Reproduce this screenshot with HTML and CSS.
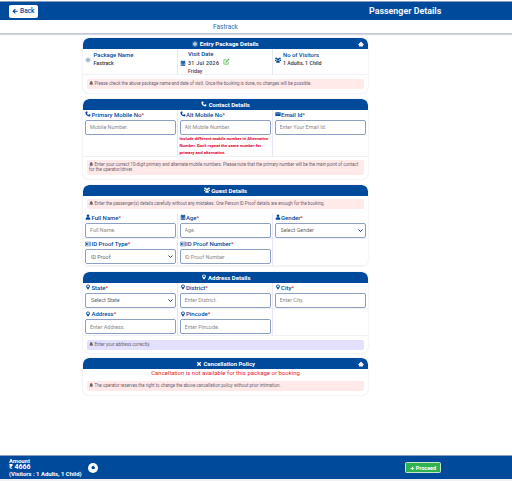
FILE: index.html
```html
<!DOCTYPE html>
<html lang="en">
<head>
<meta charset="utf-8">
<title>Passenger Details</title>
<link rel="stylesheet" href="styles.css">
</head>
<body>
<svg class="defs" width="0" height="0" aria-hidden="true">
  <symbol id="i-snow" viewBox="0 0 16 16"><path d="M8 1v14M2 4.500l12 7M14 4.500l-12 7M6 2l2 2 2-2M6 14l2-2 2 2M2 7l2.500 1L2 9.500M14 7l-2.500 1 2.500 1.500" fill="none" stroke="currentColor" stroke-width="1.800"/></symbol>
  <symbol id="i-phone" viewBox="0 0 16 16"><path d="M3 1l3 .5 1 3.500-2 1.500c.8 1.800 2.200 3.200 4 4l1.500-2 3.500 1 .5 3c-.5 1-1.500 2-3 2C6 14.500 1 9 1 4c0-1.500 1-2.500 2-3z" fill="currentColor"/></symbol>
  <symbol id="i-users" viewBox="0 0 16 16"><circle cx="8" cy="6" r="3" fill="currentColor"/><circle cx="3" cy="4" r="2.500" fill="currentColor"/><circle cx="13" cy="4" r="2.500" fill="currentColor"/><path d="M3.500 15v-3.500c0-1.500 1.500-2 4.500-2s4.500.5 4.500 2V15zM0 10.500V8.500C0 7.500 1 7 3 7l1.500.5L3 10.500zM16 10.500V8.500c0-1-1-1.500-3-1.500l-1.500.5 1.500 3z" fill="currentColor"/></symbol>
  <symbol id="i-cal" viewBox="0 0 16 16"><path d="M2 3h12v12H2z" fill="currentColor"/><path d="M4 1.500h2v3H4zM10 1.500h2v3h-2z" fill="currentColor"/><path d="M3.500 7h2v2h-2zM7 7h2v2H7zM10.500 7h2v2h-2zM3.500 10.500h2v2h-2zM7 10.500h2v2H7zM10.500 10.500h2v2h-2z" fill="#fff"/></symbol>
  <symbol id="i-edit" viewBox="0 0 16 16"><path d="M12 9v5H2V4h6" fill="none" stroke="currentColor" stroke-width="1.800"/><path d="M6 8l7-7 2 2-7 7-3 1z" fill="currentColor"/></symbol>
  <symbol id="i-up" viewBox="0 0 16 16"><path d="M8 1.500l7.500 7.500-1 2-1.500-1V14.500H3V10l-1.500 1-1-2z" fill="currentColor"/></symbol>
  <symbol id="i-bell" viewBox="0 0 16 16"><path d="M8 1c3 0 4.500 2.500 4.500 5.500 0 2.500 1 3.500 2 4.500v1h-13v-1c1-1 2-2 2-4.500C3.500 3.500 5 1 8 1zM6 13h4c0 1-1 2-2 2s-2-1-2-2z" fill="currentColor"/></symbol>
  <symbol id="i-mail" viewBox="0 0 16 16"><path d="M1 3h14v10H1z" fill="currentColor"/><path d="M1.500 4L8 9l6.500-5" fill="none" stroke="#fff" stroke-width="1.200"/></symbol>
  <symbol id="i-user" viewBox="0 0 16 16"><circle cx="8" cy="4.500" r="3.500" fill="currentColor"/><path d="M2 15v-3c0-2.500 2-3.500 6-3.500s6 1 6 3.500v3z" fill="currentColor"/></symbol>
  <symbol id="i-card" viewBox="0 0 16 16"><path d="M1 3h14v10H1z" fill="none" stroke="currentColor" stroke-width="1.400"/><path d="M3 5.500h4v5H3zM9 6h4v1H9zM9 8h4v1H9z" fill="currentColor"/></symbol>
  <symbol id="i-pin" viewBox="0 0 16 16"><path d="M8 1a5 5 0 0 0-5 5c0 3.500 5 9 5 9s5-5.500 5-9a5 5 0 0 0-5-5zm0 2.500A2.500 2.500 0 1 1 8 8.500 2.500 2.500 0 0 1 8 3.500z" fill="currentColor" fill-rule="evenodd"/></symbol>
  <symbol id="i-x" viewBox="0 0 16 16"><path d="M2 4.500L4.500 2 8 5.500 11.500 2 14 4.500 10.500 8 14 11.500 11.500 14 8 10.500 4.500 14 2 11.500 5.500 8z" fill="currentColor"/></symbol>
  <symbol id="i-left" viewBox="0 0 16 16"><path d="M8 2l2 2-3 3h8v3H7l3 3-2 2-7-6.500z" fill="currentColor"/></symbol>
  <symbol id="i-right" viewBox="0 0 16 16"><path d="M8 2L6 4l3 3H1v3h8l-3 3 2 2 7-6.500z" fill="currentColor"/></symbol>
</svg>

<div class="topstrip"></div>
<header class="appbar">
  <button class="back" type="button"><svg class="ic"><use href="#i-left"/></svg> Back</button>
  <h1 class="title">Passenger Details</h1>
</header>
<div class="subbar"><span>Fastrack</span></div>

<main class="content">
  <section class="card">
    <h2 class="card-head"><svg class="ic"><use href="#i-snow"/></svg> Entry Package Details<svg class="ic collapse"><use href="#i-up"/></svg></h2>
    <div class="grid summary">
      <div class="cell info">
        <svg class="ic side pale"><use href="#i-snow"/></svg>
        <div><div class="info-label">Package Name</div><div class="info-val">Fastrack</div></div>
      </div>
      <div class="cell info visit">
        <svg class="ic side navy"><use href="#i-cal"/></svg>
        <div>
          <div class="info-label">Visit Date</div>
          <div class="info-val date">31 Jul 2026 <svg class="ic-lg green"><use href="#i-edit"/></svg></div>
          <div class="info-val day">Friday</div>
        </div>
      </div>
      <div class="cell info">
        <svg class="ic side navy"><use href="#i-users"/></svg>
        <div><div class="info-label">No of Visitors</div><div class="info-val">1 Adults, 1 Child</div></div>
      </div>
    </div>
    <p class="note"><svg class="ic-sm"><use href="#i-bell"/></svg> Please check the above package name and date of visit. Once the booking is done, no changes will be possible.</p>
  </section>

  <section class="card">
    <h2 class="card-head"><svg class="ic"><use href="#i-phone"/></svg> Contact Details</h2>
    <div class="grid">
      <div class="cell">
        <label class="lbl"><svg class="ic"><use href="#i-phone"/></svg> Primary Mobile No<b>*</b></label>
        <input class="field" placeholder="Mobile Number.">
      </div>
      <div class="cell">
        <label class="lbl"><svg class="ic"><use href="#i-phone"/></svg> Alt Mobile No<b>*</b></label>
        <input class="field" placeholder="Alt Mobile Number.">
        <p class="warn">Include different mobile number in Alternative Number. Don't repeat the same number for primary and alternative.</p>
      </div>
      <div class="cell">
        <label class="lbl"><svg class="ic"><use href="#i-mail"/></svg> Email Id<b>*</b></label>
        <input class="field" placeholder="Enter Your Email Id.">
      </div>
    </div>
    <p class="note note-tight"><svg class="ic-sm"><use href="#i-bell"/></svg> Enter your correct 10-digit primary and alternate mobile numbers. Please note that the primary number will be the main point of contact for the operator/driver.</p>
  </section>

  <section class="card">
    <h2 class="card-head"><svg class="ic"><use href="#i-users"/></svg> Guest Details</h2>
    <p class="note note-top"><svg class="ic-sm"><use href="#i-bell"/></svg> Enter the passenger(s) details carefully without any mistakes. One Person ID Proof details are enough for the booking.</p>
    <div class="grid">
      <div class="cell">
        <label class="lbl"><svg class="ic"><use href="#i-user"/></svg> Full Name<b>*</b></label>
        <input class="field" placeholder="Full Name.">
      </div>
      <div class="cell">
        <label class="lbl"><svg class="ic"><use href="#i-cal"/></svg> Age<b>*</b></label>
        <input class="field" placeholder="Age.">
      </div>
      <div class="cell">
        <label class="lbl"><svg class="ic"><use href="#i-user"/></svg> Gender<b>*</b></label>
        <select class="field"><option>Select Gender</option></select>
      </div>
      <div class="cell">
        <label class="lbl"><svg class="ic"><use href="#i-card"/></svg> ID Proof Type<b>*</b></label>
        <select class="field"><option>ID Proof</option></select>
      </div>
      <div class="cell">
        <label class="lbl"><svg class="ic"><use href="#i-card"/></svg> ID Proof Number<b>*</b></label>
        <input class="field" placeholder="ID Proof Number">
      </div>
      <div class="cell"></div>
    </div>
  </section>

  <section class="card">
    <h2 class="card-head"><svg class="ic"><use href="#i-pin"/></svg> Address Details</h2>
    <div class="grid">
      <div class="cell">
        <label class="lbl"><svg class="ic"><use href="#i-pin"/></svg> State<b>*</b></label>
        <select class="field"><option>Select State</option></select>
      </div>
      <div class="cell">
        <label class="lbl"><svg class="ic"><use href="#i-pin"/></svg> District<b>*</b></label>
        <input class="field" placeholder="Enter District.">
      </div>
      <div class="cell">
        <label class="lbl"><svg class="ic"><use href="#i-pin"/></svg> City<b>*</b></label>
        <input class="field" placeholder="Enter City.">
      </div>
      <div class="cell">
        <label class="lbl"><svg class="ic"><use href="#i-pin"/></svg> Address<b>*</b></label>
        <input class="field" placeholder="Enter Address.">
      </div>
      <div class="cell">
        <label class="lbl"><svg class="ic"><use href="#i-pin"/></svg> Pincode<b>*</b></label>
        <input class="field" placeholder="Enter Pincode.">
      </div>
      <div class="cell"></div>
    </div>
    <p class="note note-violet"><svg class="ic-sm"><use href="#i-bell"/></svg> Enter your address correctly.</p>
  </section>

  <section class="card">
    <h2 class="card-head"><svg class="ic"><use href="#i-x"/></svg> Cancellation Policy<svg class="ic collapse"><use href="#i-up"/></svg></h2>
    <p class="cancel">Cancellation is not available for this package or booking</p>
    <p class="note"><svg class="ic-sm"><use href="#i-bell"/></svg> The operator reserves the right to change the above cancellation policy without prior intimation.</p>
  </section>
</main>

<footer class="bottom">
  <div class="amount">
    <div>Amount</div>
    <div class="price">₹ 4666</div>
    <div>(Visitors : 1 Adults, 1 Child)</div>
  </div>
  <button class="round" type="button" aria-label="Expand"><svg class="ic-sm"><use href="#i-up"/></svg></button>
  <button class="proceed" type="button"><svg class="ic-sm"><use href="#i-right"/></svg> Proceed</button>
</footer>
<div class="endstrip"></div>
</body>
</html>
```

FILE: styles.css
```css
* { box-sizing: border-box; }
html, body { margin: 0; padding: 0; }
body {
  width: 512px;
  height: 481px;
  overflow: hidden;
  background: #fff;
  font-family: Roboto, "Liberation Sans", sans-serif;
  color: #222;
  display: flex;
  flex-direction: column;
}
.defs { position: absolute; }
.ic { width: 6px; height: 6px; vertical-align: -0.5px; }
.ic-sm { width: 4.500px; height: 4.500px; vertical-align: -0.5px; }
.ic-lg { width: 7px; height: 7px; vertical-align: 0; margin-left: 2px; }
.navy { color: #004a9c; }
.pale { color: #7c9cc4; }
.green { color: #5cb85c; }

.topstrip { height: 2px; background: #fff; border-bottom: 1px solid #8d9cb8; flex: none; }
.appbar {
  height: 18px;
  flex: none;
  background: #004a9c;
  display: flex;
  align-items: center;
  padding-left: 9px;
}
.back {
  width: 29px;
  height: 13px;
  border: 0;
  border-radius: 2px;
  background: #fff;
  color: #004a9c;
  font: 500 6.500px Roboto, sans-serif;
  padding: 0;
}
.title {
  margin: 0 0 0 331px;
  font-size: 8.900px;
  font-weight: 700;
  color: #f4f7fb;
  white-space: nowrap;
}
.subbar {
  height: 14px;
  flex: none;
  background: #fff;
  border-bottom: 1px solid #c3c6d6;
  box-shadow: 0 1px 1px #d5d7e2;
  padding-left: 83px;
}
.subbar span {
  display: block;
  width: 285px;
  text-align: center;
  font-size: 6.500px;
  line-height: 14px;
  color: #2b6cb0;
}

.content {
  flex: 1;
  min-height: 0;
  padding: 4px 0 0 83px;
  display: flex;
  flex-direction: column;
  gap: 5.700px;
}
.card {
  width: 285px;
  flex: none;
  background: #fff;
  border-radius: 6px;
  box-shadow: 0 0 2px #d9d8f0;
  overflow: hidden;
}
.card-head {
  position: relative;
  margin: 0;
  height: 11px;
  background: #004a9c;
  border-radius: 6px 6px 0 0;
  color: #fff;
  font-size: 6px;
  font-weight: 700;
  line-height: 11px;
  text-align: center;
}
.collapse { position: absolute; right: 4px; top: 2.500px; }

.grid { display: grid; grid-template-columns: 94.500px 95px 95.500px; }
.cell {
  padding: 1px 0.500px 0.500px 2px;
  border-right: 1px solid #e8e8f3;
  border-bottom: 1px solid #f0f0f7;
}
.cell:nth-child(3n) { border-right: 0; padding-right: 2px; }

.summary .info { display: flex; align-items: flex-start; gap: 2.500px; height: 26px; padding: 1.500px 2px 0; }
.summary .visit { align-items: center; padding-top: 2px; }
.summary .side { flex: none; margin-top: 6px; }
.summary .visit .side { margin-top: 0; }
.info-label { font-size: 5.900px; line-height: 8px; color: #004a9c; font-weight: 500; }
.info-val { font-size: 5.300px; line-height: 8px; color: #333; font-weight: 500; }
.date { letter-spacing: 0.300px; line-height: 7.500px; }
.day { color: #5a3a55; line-height: 7.500px; }

.lbl {
  display: block;
  height: 8px;
  margin-bottom: 1px;
  font-size: 6px;
  line-height: 8px;
  font-weight: 500;
  color: #004a9c;
  white-space: nowrap;
}
.lbl .ic { margin-right: -1px; }
.lbl b { color: #e0202f; font-weight: 500; }
.field {
  display: block;
  width: 100%;
  height: 15px;
  margin: 0;
  padding: 0 4px;
  border: 1px solid #8e9fc4;
  border-radius: 2px;
  background: #fff;
  font: 5.400px Roboto, sans-serif;
  color: #666;
}
.field::placeholder { color: #8a8a8a; opacity: 1; }
select.field {
  appearance: none;
  padding: 0 10px 0 5px;
  background: #fff url("data:image/svg+xml,%3Csvg xmlns='http://www.w3.org/2000/svg' viewBox='0 0 10 6'%3E%3Cpath d='M1 1l4 4 4-4' fill='none' stroke='%23002a5c' stroke-width='1.800'/%3E%3C/svg%3E") no-repeat right 2px center / 5px 3px;
}
.warn {
  margin: 0;
  font-size: 4.300px;
  line-height: 7px;
  font-weight: 700;
  color: #e3002b;
}
.note {
  margin: 4px;
  padding: 2.250px 2px;
  background: #ffe9e9;
  border-radius: 2px;
  font-size: 4.420px;
  line-height: 5.500px;
  color: #6b6270;
}
.note-tight { margin-top: 2.500px; }
.note-top { margin: 3px 4px 4px; }
.note-violet { background: #e2e0fc; margin-bottom: 3px; }
.cancel {
  margin: 0;
  height: 11.700px;
  text-align: center;
  font-size: 6px;
  line-height: 7.500px;
  color: #ee1c25;
}
.cancel + .note { margin-top: 0; }

.bottom {
  height: 24px;
  flex: none;
  background: #004a9c;
  border-top: 1px solid #8d9cc4;
  display: flex;
  align-items: center;
  padding-left: 9px;
  color: #fff;
}
.amount { width: 78px; font-size: 5.900px; line-height: 6.500px; font-weight: 700; white-space: nowrap; }
.price { font-size: 7px; }
.round {
  width: 10px;
  height: 10px;
  padding: 0;
  border: 0;
  border-radius: 50%;
  background: #fff;
  color: #004a9c;
  display: flex;
  align-items: center;
  justify-content: center;
  margin-left: 1px;
}
.proceed {
  margin-left: 307px;
  width: 36px;
  height: 11px;
  padding: 0;
  border: 1px solid #c8e6c9;
  border-radius: 1.500px;
  background: #2fb24f;
  color: #fff;
  font: 700 5.500px Roboto, sans-serif;
}
.endstrip { height: 2px; background: #f1f1f4; flex: none; }
```
